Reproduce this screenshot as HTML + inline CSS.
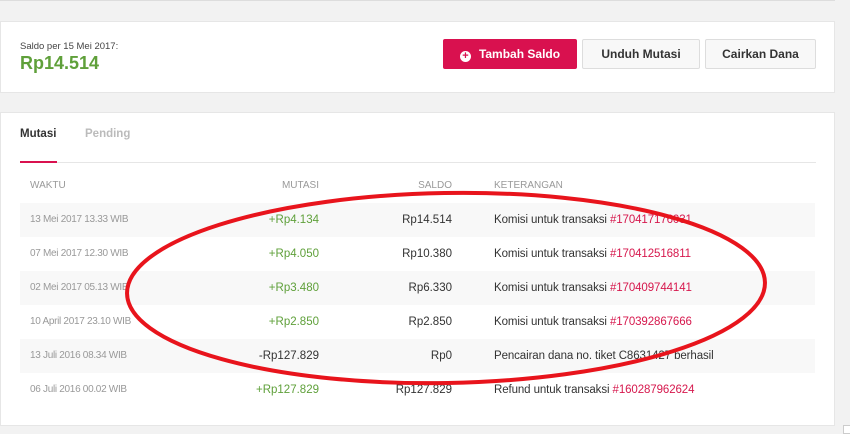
<!DOCTYPE html>
<html><head><meta charset="utf-8"><style>
body{margin:0;width:850px;height:432px;background:#f2f2f2;font-family:"Liberation Sans",sans-serif;position:relative;overflow:hidden}
.card{position:absolute;left:0;width:835px;background:#fff;border:1px solid #e6e6e6;box-sizing:border-box}
.btn{position:absolute;top:39px;height:30px;box-sizing:border-box;border:1px solid #ddd;background:#f8f8f8;border-radius:2px;font-size:12px;font-weight:bold;color:#333;text-align:center;line-height:28px}
.row{position:absolute;left:20px;width:795px;height:34px;font-size:11.5px;line-height:34px}
.row span{position:absolute}
.w{left:10px;color:#999;font-size:10px;letter-spacing:-0.3px}
.m{right:496px;color:#5fa03a}
.s{right:363px;color:#333}
.k{left:474px;color:#333;letter-spacing:-0.1px}
.k b{font-weight:normal;color:#d6184d}
.sh{background:#f8f8f8}
</style></head><body>
<div style="position:absolute;left:0;top:0;width:835px;height:1px;background:#ddd"></div>
<div class="card" style="top:21px;height:72px">
<div style="position:absolute;left:19px;top:19px;font-size:9.5px;color:#444">Saldo per 15 Mei 2017:</div>
<div style="position:absolute;left:19px;top:31px;font-size:18px;font-weight:bold;color:#5fa03a">Rp14.514</div>
</div>
<div class="btn" style="left:443px;width:134px;background:#d9114f;border-color:#d9114f;color:#fff"><span style="display:inline-block;width:11px;height:11px;border-radius:50%;background:#fff;color:#d9114f;font-size:11px;line-height:11px;vertical-align:-1px;margin-right:8px">+</span>Tambah Saldo</div>
<div class="btn" style="left:582px;width:118px">Unduh Mutasi</div>
<div class="btn" style="left:705px;width:111px">Cairkan Dana</div>
<div class="card" style="top:112px;height:314px">
<div style="position:absolute;left:19px;top:15px;font-size:11.5px;font-weight:bold;color:#333">Mutasi</div>
<div style="position:absolute;left:84px;top:15px;font-size:11.5px;font-weight:bold;color:#bbb">Pending</div>
<div style="position:absolute;left:19px;top:49px;width:796px;height:1px;background:#e6e6e6"></div>
<div style="position:absolute;left:19px;top:48px;width:37px;height:2px;background:#d9114f"></div>
</div>
<div class="row" style="top:169px;font-size:10px;color:#999"><span style="left:10px">WAKTU</span><span style="right:496px">MUTASI</span><span style="right:363px">SALDO</span><span style="left:474px">KETERANGAN</span></div>
<div class="row sh" style="top:203px"><span class="w">13 Mei 2017 13.33 WIB</span><span class="m">+Rp4.134</span><span class="s">Rp14.514</span><span class="k">Komisi untuk transaksi <b>#170417176031</b></span></div>
<div class="row" style="top:237px"><span class="w">07 Mei 2017 12.30 WIB</span><span class="m">+Rp4.050</span><span class="s">Rp10.380</span><span class="k">Komisi untuk transaksi <b>#170412516811</b></span></div>
<div class="row sh" style="top:271px"><span class="w">02 Mei 2017 05.13 WIB</span><span class="m">+Rp3.480</span><span class="s">Rp6.330</span><span class="k">Komisi untuk transaksi <b>#170409744141</b></span></div>
<div class="row" style="top:305px"><span class="w">10 April 2017 23.10 WIB</span><span class="m">+Rp2.850</span><span class="s">Rp2.850</span><span class="k">Komisi untuk transaksi <b>#170392867666</b></span></div>
<div class="row sh" style="top:339px"><span class="w">13 Juli 2016 08.34 WIB</span><span class="m" style="color:#333">-Rp127.829</span><span class="s">Rp0</span><span class="k">Pencairan dana no. tiket C8631427 berhasil</span></div>
<div class="row" style="top:373px"><span class="w">06 Juli 2016 00.02 WIB</span><span class="m">+Rp127.829</span><span class="s">Rp127.829</span><span class="k">Refund untuk transaksi <b>#160287962624</b></span></div>
<svg style="position:absolute;left:0;top:0" width="850" height="432"><ellipse cx="446" cy="288" rx="319" ry="95" fill="none" stroke="#e8141c" stroke-width="4" transform="rotate(-1 446 288)"/></svg>
<div style="position:absolute;left:843px;top:425px;width:7px;height:7px;background:#fff;border:1px solid #ccc"></div>
</body></html>
